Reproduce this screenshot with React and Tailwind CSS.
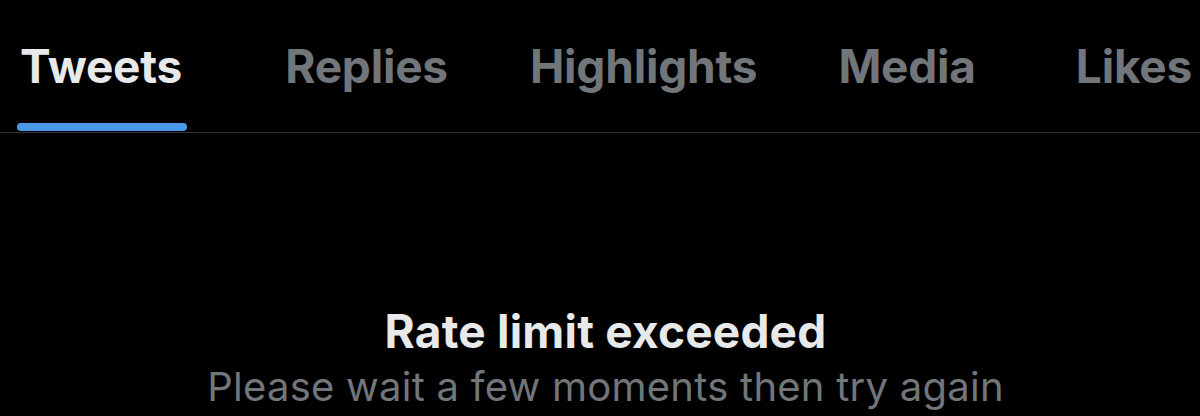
export default function App() {
  const tabs = [
    { label: "Tweets", active: true, ml: "ml-[20px]" },
    { label: "Replies", ml: "ml-[103px]" },
    { label: "Highlights", ml: "ml-[82px]" },
    { label: "Media", ml: "ml-[81px]" },
    { label: "Likes", ml: "ml-[100px]" },
  ];

  return (
    <main className="h-[416px] w-[1200px] overflow-hidden bg-black" style={{ fontFamily: "Inter, 'Liberation Sans', sans-serif" }}>
      <nav className="flex h-[133px] border-b border-[#2f3336]">
        {tabs.map((t) => (
          <div key={t.label} className={`${t.ml} relative flex shrink-0 flex-col`}>
            <span className={`pt-[36px] text-[46px] font-bold leading-[60px] tracking-[-0.2px] ${t.active ? "text-[#e7e9ea]" : "text-[#71767b]"}`}>
              {t.label}
            </span>
            {t.active && <div className="absolute bottom-[1px] left-[-3px] right-[-5px] h-[8px] rounded-full bg-[#4a99e9]" />}
          </div>
        ))}
      </nav>
      <section className="flex flex-col items-center pl-[11px] pt-[172px]">
        <h1 className="text-[46px] font-bold leading-[52px] tracking-[0.2px] text-[#e7e9ea]">Rate limit exceeded</h1>
        <p className="mt-[4px] text-[40px] leading-[52px] tracking-[0.25px] text-[#71767b]">Please wait a few moments then try again</p>
      </section>
    </main>
  );
}
